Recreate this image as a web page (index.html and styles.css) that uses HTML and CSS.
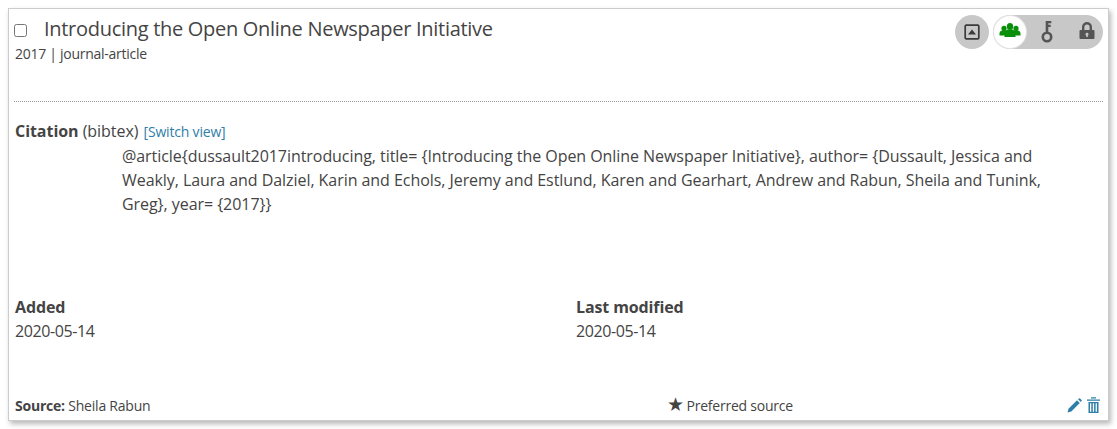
FILE: index.html
```html
<!DOCTYPE html>
<html lang="en">
<head>
<meta charset="utf-8">
<title>Work</title>
<link rel="stylesheet" href="styles.css">
</head>
<body>
<div class="card">
  <header class="head">
    <div class="head-main">
      <div class="title-row">
        <input type="checkbox" class="check">
        <span class="title">Introducing the Open Online Newspaper Initiative</span>
      </div>
      <div class="meta">2017 | journal-article</div>
    </div>
    <div class="tools">
      <div class="round-btn">
        <svg width="16" height="16" viewBox="0 0 16 16"><rect x="1.200" y="1.200" width="13.600" height="13.600" rx="1" fill="none" stroke="#3a3a3a" stroke-width="1.700"/><path d="M4 10.500 8 5.500l4 5z" fill="#3a3a3a"/></svg>
      </div>
      <div class="pill">
        <span class="pill-on">
          <svg width="22" height="18" viewBox="0 0 22 18"><g fill="#0a8f0a"><ellipse cx="11" cy="3.500" rx="3.200" ry="3.500"/><path d="M5.500 14V11C5.500 8.500 7 7 9 6.500h4c2 .5 3.500 2 3.500 4.500v3z"/><ellipse cx="5" cy="5.500" rx="2.600" ry="2.800"/><path d="M.5 12.500V10.500C.5 8.500 2 7.500 3.500 7.500h4v5z"/><ellipse cx="17" cy="5.500" rx="2.600" ry="2.800"/><path d="M21.500 12.500V10.500c0-2-1.500-3-3-3h-4v5z"/></g></svg>
        </span>
        <span class="pill-icon">
          <svg width="14" height="22" viewBox="0 0 14 22"><circle cx="7" cy="16" r="4.200" fill="none" stroke="#555" stroke-width="2.600"/><path d="M5.700 0h5.600v2.200H8.300v1.600h2.400V6H8.300v6H5.700z" fill="#555"/></svg>
        </span>
        <span class="pill-icon">
          <svg width="16" height="20" viewBox="0 0 16 20"><path d="M3 8V5a5 5 0 0 1 10 0v3h-2.400V5a2.600 2.600 0 0 0-5.200 0v3z" fill="#555"/><path fill-rule="evenodd" d="M1.500 8h13a1 1 0 0 1 1 1v7a1 1 0 0 1-1 1h-13a1 1 0 0 1-1-1V9a1 1 0 0 1 1-1zM8 10.800a1.500 1.500 0 0 0-.8 2.800V15h1.600v-1.400a1.500 1.500 0 0 0-.8-2.800z" fill="#555"/></svg>
        </span>
      </div>
    </div>
  </header>
  <hr class="rule">
  <section class="citation">
    <div class="cit-label"><b>Citation</b> (bibtex) <a class="switch" href="#">[Switch view]</a></div>
    <div class="cit-body">@article{dussault2017introducing, title= {Introducing the Open Online Newspaper Initiative}, author= {Dussault, Jessica and Weakly, Laura and Dalziel, Karin and Echols, Jeremy and Estlund, Karen and Gearhart, Andrew and Rabun, Sheila and Tunink, Greg}, year= {2017}}</div>
  </section>
  <section class="dates">
    <div><div class="date-label">Added</div><div class="date-val">2020-05-14</div></div>
    <div><div class="date-label">Last modified</div><div class="date-val">2020-05-14</div></div>
  </section>
  <footer class="foot">
    <div class="source"><b>Source:</b> Sheila Rabun</div>
    <div class="pref"><span class="star">★</span> Preferred source</div>
    <div class="actions">
      <svg width="15" height="15" viewBox="0 0 15 15"><path d="M.6 14.400l.9-3.700L10 2.200l2.800 2.800-8.500 8.500z" fill="#2e7ea8"/><path d="M11 1.200l.9-.7a.9.9 0 0 1 1.200 0l1.400 1.400a.9.9 0 0 1 0 1.200l-.7.9z" fill="#2e7ea8"/></svg>
      <svg width="13" height="16" viewBox="0 0 13 16"><path d="M0 2.500h13v1.300H0zM4 .3h5v1.300H4z" fill="#2e7ea8"/><path d="M1.500 5h10v11h-10zM3 6.200v8.600h1.300V6.200zm2.800 0v8.600h1.300V6.200zm2.800 0v8.600h1.300V6.200z" fill="#2e7ea8" fill-rule="evenodd"/></svg>
    </div>
  </footer>
</div>
</body>
</html>
```

FILE: styles.css
```css
html, body { margin: 0; padding: 0; background: #fff; }
body {
  padding: 8px;
  font-family: "Open Sans", "Noto Sans", sans-serif;
  font-size: 14px;
  color: #444;
  height: 429px;
  box-sizing: border-box;
}
.card {
  width: 1101px;
  height: 413px;
  box-sizing: border-box;
  border: 1px solid #ccc;
  box-shadow: 2px 3px 5px rgba(0,0,0,.28);
  padding: 6px 5px 0 6px;
  display: flex;
  flex-direction: column;
}
.head { display: flex; justify-content: space-between; align-items: flex-start; height: 86px; }
.title-row { display: flex; align-items: center; height: 27px; }
.check { width: 13px; height: 13px; margin: 3px 17px 0 -1px; }
.title { font-size: 20px; letter-spacing: -.29px; color: #444; }
.meta { font-size: 14px; letter-spacing: -.27px; line-height: 20px; margin-top: 2px; }
.tools { display: flex; gap: 4px; }
.round-btn {
  width: 34px; height: 34px; border-radius: 50%;
  background: #c8c8c8; display: flex; align-items: center; justify-content: center;
}
.pill {
  height: 34px; width: 110px; border-radius: 17px; background: #c8c8c8;
  display: flex; align-items: center; padding-left: 1px; box-sizing: border-box;
}
.pill-on {
  width: 32px; height: 32px; border-radius: 50%; background: #fff; box-shadow: 0 0 0 1px #e2e2e2;
  display: flex; align-items: center; justify-content: center;
}
.pill-icon { display: flex; align-items: center; justify-content: center; width: 22px; }
.pill-on + .pill-icon { margin-left: 10px; }
.pill-icon + .pill-icon { margin-left: 18px; }
.rule { border: 0; border-top: 1px dotted #999; margin: 0 0 18px -1px; width: 1089px; }
.citation { height: 176px; }
.cit-label { font-size: 16px; letter-spacing: -.05px; line-height: 24px; margin-top: -1px; }
.switch { font-size: 14px; letter-spacing: -.18px; color: #2e7ea8; text-decoration: none; margin-left: 1px; }
.cit-body { margin: 0 40px 0 107px; font-size: 16px; letter-spacing: -.055px; line-height: 24px; }
.dates { display: grid; grid-template-columns: 561px 1fr; height: 97px; }
.date-label { font-weight: 700; font-size: 16px; letter-spacing: -.12px; line-height: 22px; }
.date-val { font-size: 16px; letter-spacing: -.4px; line-height: 22px; margin-top: 2px; }
.foot { display: grid; grid-template-columns: 652px 1fr auto; align-items: center; height: 24px; font-size: 14px; letter-spacing: -.22px; }
.source b { font-weight: 700; }
.star { font-size: 19px; letter-spacing: 0; line-height: 0; margin-right: -1px; font-family: "DejaVu Sans", sans-serif; }
.actions { display: flex; justify-content: flex-end; gap: 5px; align-items: center; padding-right: 3px; }
```
